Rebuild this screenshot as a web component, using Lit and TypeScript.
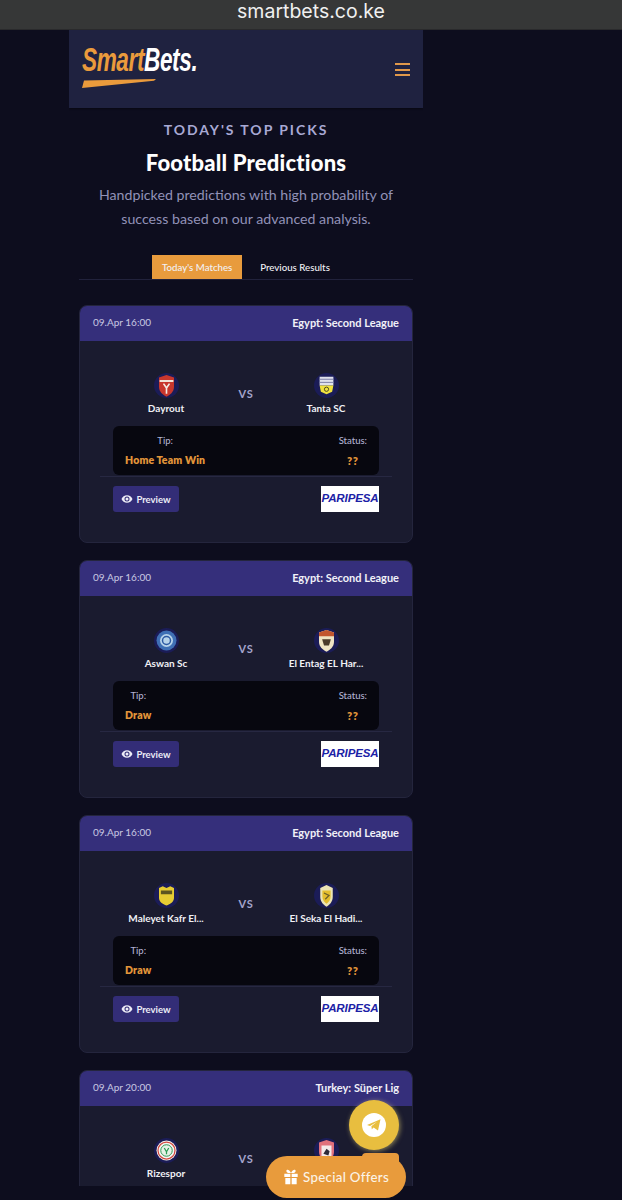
import { LitElement, html, css, svg } from "lit";
import { customElement } from "lit/decorators.js";

const shield = (fill: string, inner: any) => svg`
  <path d="M6 5.5 L12 3.5 L18 5.5 V13 C18 17 15 19.5 12 21 C9 19.5 6 17 6 13 Z" fill="${fill}" />${inner}`;

const logos: Record<string, any> = {
  dayrout: shield("#c8372d", svg`
    <path d="M6.5 7.6 H17.5 V9.2 H6.5 Z" fill="#f1e3d8" />
    <path d="M9.6 10.5 L12 14 L14.4 10.5 M12 14 V18.5" stroke="#f4ece6" stroke-width="1.3" fill="none" />`),
  tanta: svg`
    <rect x="6.5" y="5" width="11" height="7" fill="#dfe1ec" />
    <path d="M6.5 7 H17.5 M6.5 9.5 H17.5" stroke="#7d80a8" stroke-width="0.8" />
    <path d="M6.5 12 H17.5 L16.5 17 L12 19 L7.5 17 Z" fill="#f0e23f" />
    <circle cx="12" cy="15" r="1.7" fill="none" stroke="#3b3a1e" stroke-width="0.7" />`,
  aswan: svg`
    <circle cx="12" cy="12" r="8" fill="#3f6fb5" />
    <circle cx="12" cy="12" r="5.2" fill="#b8d3ea" />
    <circle cx="12" cy="12" r="3.2" fill="none" stroke="#2d5aa3" stroke-width="1.2" />`,
  entag: shield("#efe4c4", svg`
    <path d="M6 5.5 L12 3.5 L18 5.5 V8.5 H6 Z" fill="#c2562f" />
    <path d="M8.5 11 H15.5 L14 16 H10 Z" fill="#4a3a2a" />`),
  maleyet: svg`
    <path d="M6 6 L9 4.5 L12 6 L15 4.5 L18 6 V14 C18 17 15 19 12 20 C9 19 6 17 6 14 Z" fill="#e6cc33" />
    <rect x="7.5" y="8" width="9" height="3" fill="#5c5520" />`,
  seka: svg`
    <path d="M7 6 L12 3.5 L17 6 V13 C17 17 14.5 19.5 12 21 C9.5 19.5 7 17 7 13 Z" fill="#ece4b4" />
    <path d="M8.7 8 H15.3 V13 C15.3 15.5 13.5 17.5 12 18.5 C10.5 17.5 8.7 15.5 8.7 13 Z" fill="#e3bd2e" />
    <path d="M10 10 L14 12 L11 15" stroke="#6d5f28" stroke-width="1" fill="none" />`,
  rize: svg`
    <circle cx="12" cy="12" r="8" fill="#f4f5f2" />
    <circle cx="12" cy="12" r="6.8" fill="none" stroke="#d2493f" stroke-width="1" />
    <circle cx="12" cy="12" r="4.6" fill="#e6f1e6" stroke="#2f9a58" stroke-width="0.8" />
    <path d="M10.2 10 L12 13 L13.8 10 M12 13 V15" stroke="#2b9d55" stroke-width="1" fill="none" />`,
  samsun: shield("#e0707c", svg`
    <rect x="8" y="8" width="8" height="9" fill="#f3e9ea" />
    <path d="M9.5 14.5 L12 10.5 L14.5 12.5 L13.5 16 Z" fill="#2c2a38" />`),
};

const teamLogo = (key: string) => html`
  <svg class="crest" viewBox="0 0 24 24" width="25" height="25" aria-hidden="true">
    <circle cx="12" cy="12" r="12" fill="#1b1c57"></circle>
    <g transform="translate(12 12) scale(1.2) translate(-12 -12)">${logos[key]}</g>
  </svg>`;

type Match = {
  date: string; league: string; home: string; away: string;
  homeLogo: string; awayLogo: string; tip?: string;
};

const matches: Match[] = [
  { date: "09.Apr 16:00", league: "Egypt: Second League", home: "Dayrout", away: "Tanta SC", homeLogo: "dayrout", awayLogo: "tanta", tip: "Home Team Win" },
  { date: "09.Apr 16:00", league: "Egypt: Second League", home: "Aswan Sc", away: "El Entag EL Har...", homeLogo: "aswan", awayLogo: "entag", tip: "Draw" },
  { date: "09.Apr 16:00", league: "Egypt: Second League", home: "Maleyet Kafr El...", away: "El Seka El Hadi...", homeLogo: "maleyet", awayLogo: "seka", tip: "Draw" },
  { date: "09.Apr 20:00", league: "Turkey: Süper Lig", home: "Rizespor", away: "", homeLogo: "rize", awayLogo: "samsun" },
];

@customElement("app-root")
export class AppRoot extends LitElement {
  static styles = css`
    :host {
      display: block;
      position: relative;
      height: 1200px;
      overflow: hidden;
      background: #0d0d1e;
      font-family: "Lato", "Noto Sans", sans-serif;
      color: #fff;
    }
    .urlbar {
      height: 30px;
      background: #363737;
      box-shadow: inset 0 -1px 0 #2a2a2c;
      display: flex;
      justify-content: center;
      box-sizing: border-box;
      font: 400 19.5px/22px "Inter", "Liberation Sans", sans-serif;
      color: #f0f0f0;
    }
    .page {
      width: 354px;
      margin-left: 69px;
      height: 1156px;
      overflow: hidden;
    }
    .topbar {
      height: 78px;
      background: #1f2240;
      box-shadow: 0 1px 2px rgba(0, 0, 0, 0.4);
      display: flex;
      justify-content: space-between;
      align-items: flex-start;
      padding: 12px 13px 0 13px;
      box-sizing: border-box;
    }
    .logo {
      display: flex;
      flex-direction: column;
      width: 115px;
    }
    .wordmark {
      font: italic 700 33px/35px "Liberation Sans", sans-serif;
      letter-spacing: -0.6px;
      color: #ea9b3c;
      white-space: nowrap;
      transform: scaleX(0.685);
      transform-origin: left center;
    }
    .wordmark b { color: #fff; font-weight: 700; }
    .swoosh { display: block; margin-top: 2px; }
    .burger {
      margin-top: 21px;
      width: 15px;
      height: 13px;
      display: flex;
      flex-direction: column;
      justify-content: space-between;
    }
    .burger i { display: block; height: 2px; background: #e0984a; }
    .intro {
      text-align: center;
      padding-top: 13px;
    }
    .eyebrow {
      font-size: 14px;
      line-height: 17px;
      font-weight: 700;
      letter-spacing: 1.95px;
      color: #a8a9d4;
    }
    h1 {
      margin: 12px 0 0;
      font-size: 22px;
      line-height: 26px;
      font-weight: 900;
      letter-spacing: 0.2px;
    }
    .intro p {
      margin: 7px 0 0;
      font-size: 14.2px;
      line-height: 24px;
      font-weight: 400;
      color: #9292b8;
      padding: 0 14px;
    }
    .tabs {
      margin: 24px 10px 0;
      display: flex;
      justify-content: center;
      border-bottom: 1px solid #21223c;
      height: 24px;
      font-size: 9.7px;
    }
    .tab {
      display: flex;
      align-items: center;
      padding: 0 10px;
      height: 24px;
      box-sizing: border-box;
      color: #f1f1f6;
      font-weight: 500;
      white-space: nowrap;
    }
    .tab.active {
      width: 90px;
      justify-content: center;
      padding: 0;
      background: #e89b3d;
      margin-right: 8px;
    }
    .cards {
      margin: 25px 10px 0;
      display: flex;
      flex-direction: column;
      gap: 17px;
    }
    .card {
      height: 238px;
      flex: none;
      background: #1a1b2f;
      border: 1px solid #24253d;
      border-radius: 8px;
      box-sizing: border-box;
      overflow: hidden;
    }
    .card-head {
      height: 36px;
      margin: -1px -1px 0;
      background: #352f7b;
      display: flex;
      justify-content: space-between;
      align-items: center;
      padding: 0 14px 2px 14px;
      box-sizing: border-box;
    }
    .date { font-size: 10px; font-weight: 400; color: #c9c9e2; }
    .league { font-size: 11px; font-weight: 700; color: #f1f1f8; }
    .teams {
      margin: 32px 33px 0;
      display: grid;
      grid-template-columns: 106px 1fr 106px;
      align-items: start;
    }
    .team {
      display: flex;
      flex-direction: column;
      align-items: center;
      min-width: 0;
    }
    .crest { display: block; }
    .name {
      margin-top: 4px;
      min-height: 13px;
      font-size: 10px;
      line-height: 13px;
      font-weight: 700;
      color: #f0f0f5;
      white-space: nowrap;
    }
    .vs {
      text-align: center;
      font-size: 11px;
      font-weight: 700;
      letter-spacing: 0.7px;
      color: #a4a5cd;
      padding-top: 14px;
      line-height: 14px;
    }
    .tipbox {
      margin: 11px 33px 0;
      height: 49px;
      border-radius: 6px;
      background: #07070f;
      display: flex;
      justify-content: space-between;
      padding: 0 12px;
      box-sizing: border-box;
    }
    .tipcol {
      display: flex;
      flex-direction: column;
      align-items: center;
      padding-top: 9px;
    }
    .label { font-size: 9.5px; line-height: 12px; color: #b0b0d0; font-weight: 500; }
    .value {
      margin-top: 7px;
      font-size: 10.5px;
      line-height: 13px;
      font-weight: 800;
      letter-spacing: 0.15px;
      color: #e2953a;
    }
    .value.q { font-size: 11px; letter-spacing: 0.6px; }
    .rule {
      margin: 1px 20px 0;
      height: 1px;
      background: #272842;
    }
    .foot {
      margin: 9px 33px 0;
      display: flex;
      justify-content: space-between;
    }
    .preview {
      width: 66px;
      height: 26px;
      border-radius: 3px;
      background: #332d77;
      display: flex;
      align-items: center;
      justify-content: center;
      gap: 3px;
      font-size: 9.5px;
      font-weight: 700;
      color: #ecebf6;
    }
    .brand {
      width: 58px;
      height: 26px;
      background: #fff;
      display: flex;
      align-items: center;
      justify-content: center;
      font: italic 700 11.5px/1 "Liberation Sans", sans-serif;
      letter-spacing: -0.1px;
      color: #1b21a6;
    }
    .tg {
      position: absolute;
      left: 349px;
      top: 1100px;
      width: 50px;
      height: 50px;
      border-radius: 50%;
      background: #e8be3f;
      box-shadow: 1px 1px 5px rgba(240, 220, 120, 0.55);
      display: flex;
      align-items: center;
      justify-content: center;
    }
    .tab-nub {
      position: absolute;
      left: 362px;
      top: 1153px;
      width: 37px;
      height: 12px;
      border-radius: 4px 4px 0 0;
      background: #e79a3c;
    }
    .offers {
      position: absolute;
      left: 266px;
      top: 1156px;
      width: 140px;
      height: 42px;
      border-radius: 21px;
      background: #e89b3c;
      display: flex;
      align-items: center;
      justify-content: center;
      gap: 4px;
      font-size: 13.3px;
      font-weight: 500;
      color: #fbf3e6;
      letter-spacing: 0.3px;
    }
  `;

  render() {
    return html`
      <div class="urlbar">smartbets.co.ke</div>
      <div class="page">
        <header class="topbar">
          <div class="logo">
            <div class="wordmark">Smart<b>Bets.</b></div>
            <svg class="swoosh" width="74" height="9" viewBox="0 0 74 9" aria-hidden="true">
              <path d="M2 1.5 L74 0 L72 1.8 L0 9 Z" fill="#ea9b3c"></path>
            </svg>
          </div>
          <div class="burger"><i></i><i></i><i></i></div>
        </header>
        <section class="intro">
          <div class="eyebrow">TODAY'S TOP PICKS</div>
          <h1>Football Predictions</h1>
          <p>Handpicked predictions with high probability of success based on our advanced analysis.</p>
        </section>
        <nav class="tabs">
          <div class="tab active">Today's Matches</div>
          <div class="tab">Previous Results</div>
        </nav>
        <div class="cards">
          ${matches.map(
            (m) => html`
              <article class="card">
                <div class="card-head">
                  <span class="date">${m.date}</span>
                  <span class="league">${m.league}</span>
                </div>
                <div class="teams">
                  <div class="team">${teamLogo(m.homeLogo)}<div class="name">${m.home}</div></div>
                  <div class="vs">VS</div>
                  <div class="team">${teamLogo(m.awayLogo)}<div class="name">${m.away}</div></div>
                </div>
                ${m.tip
                  ? html`
                      <div class="tipbox">
                        <div class="tipcol"><span class="label">Tip:</span><span class="value">${m.tip}</span></div>
                        <div class="tipcol"><span class="label">Status:</span><span class="value q">??</span></div>
                      </div>
                      <div class="rule"></div>
                      <div class="foot">
                        <div class="preview">
                          <svg width="12" height="12" viewBox="0 0 24 24" aria-hidden="true">
                            <path d="M12 4.5C7 4.5 2.7 7.6 1 12c1.7 4.4 6 7.5 11 7.5s9.3-3.1 11-7.5c-1.7-4.4-6-7.5-11-7.5zm0 12.5a5 5 0 1 1 0-10 5 5 0 0 1 0 10zm0-8a3 3 0 1 0 0 6 3 3 0 0 0 0-6z" fill="#ecebf6"></path>
                          </svg>
                          Preview
                        </div>
                        <div class="brand">PARIPESA</div>
                      </div>
                    `
                  : ""}
              </article>
            `
          )}
        </div>
      </div>
      <div class="tg">
        <svg width="24" height="24" viewBox="0 0 24 24" aria-hidden="true">
          <circle cx="12" cy="12" r="12" fill="#fff"></circle>
          <path d="M5 12 L18.5 6.2 L16 17.5 L11.6 14.4 L9.8 16.2 L9.4 13.2 L15 8.8 L8 12.9 Z" fill="#e8be3f"></path>
        </svg>
      </div>
      <div class="tab-nub"></div>
      <div class="offers">
        <svg width="16" height="16" viewBox="0 0 24 24" aria-hidden="true">
          <path d="M2 7h9v5H2zM13 7h9v5h-9zM3.5 13.5H11V23H3.5zM13 13.5h7.5V23H13zM12 6C10 1.5 7.5 0.5 6 1.2 4 2.2 5 5.5 8 6zM12 6c2-4.5 4.5-5.500 6-4.800 2 1 1 4.300-2 4.800z" fill="#fff"></path>
        </svg>
        Special Offers
      </div>
    `;
  }
}
